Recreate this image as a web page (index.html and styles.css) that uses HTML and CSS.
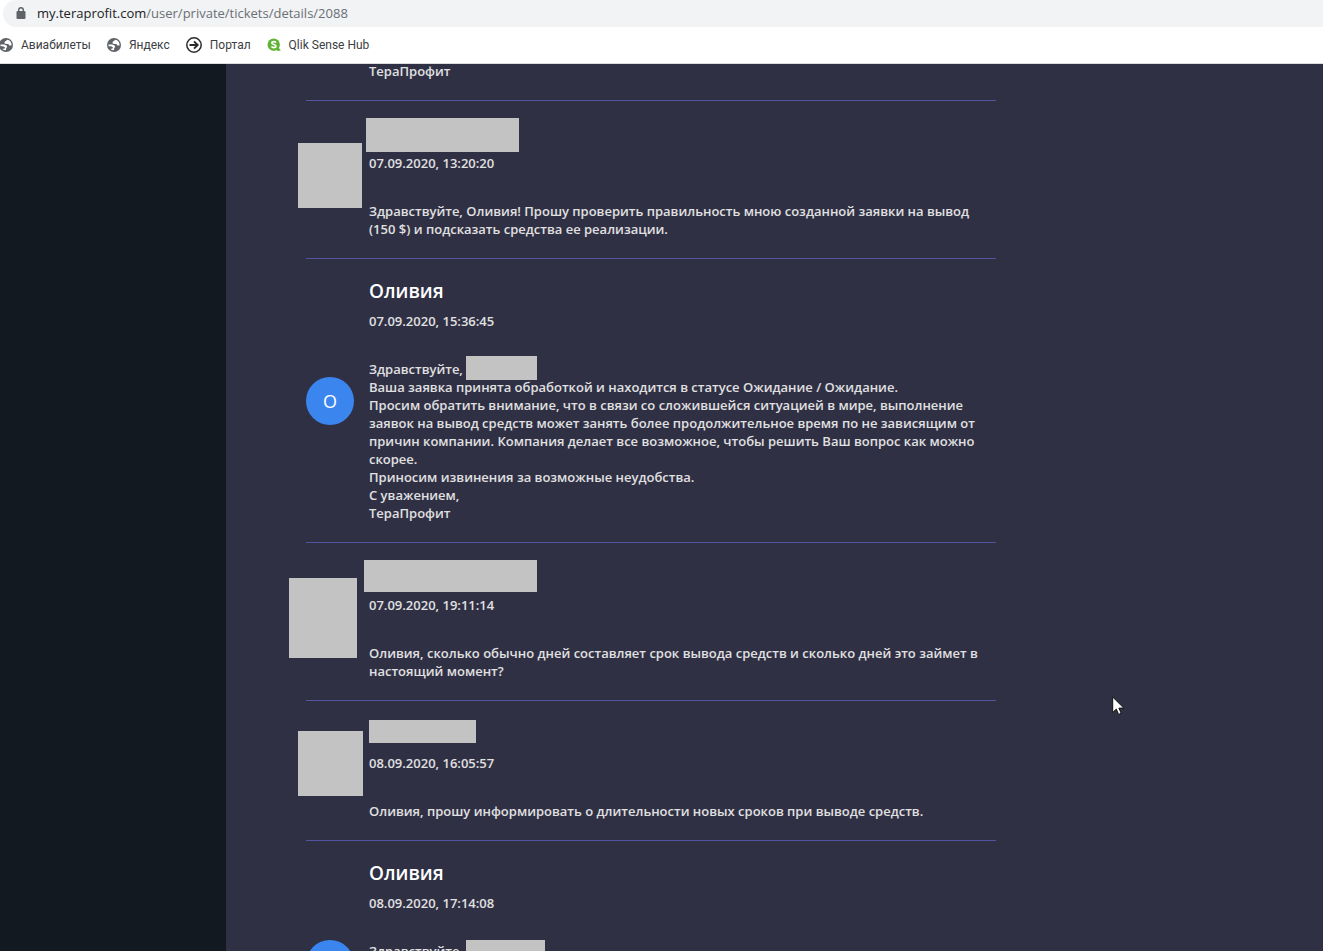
FILE: index.html
```html
<!doctype html>
<html lang="ru">
<head>
<meta charset="utf-8">
<meta name="viewport" content="width=device-width, initial-scale=1.0">
<link rel="stylesheet" href="styles.css">
<title>my.teraprofit.com</title>
</head>
<body>
<svg class="symbols" aria-hidden="true">
<symbol id="globe" viewBox="0 0 14 14">
<circle cx="7" cy="7" r="7" fill="#5f6368"/>
<path d="M8.500 1.700 6 3.400 5.300 5l1.500.9h2.400l1.300 1.700h2A5.600 5.600 0 0 0 8.500 1.700zM1.400 6.400h3.800l2.400 1.100.6 1.400-1 1-.2 2.400A5.600 5.600 0 0 1 3.300 11l2.300-.6.3-1.200-2-.9H1.600z" fill="#fff"/>
</symbol>
</svg>

<header class="browser">
<div class="address" role="textbox" aria-label="Адрес" aria-readonly="true">
<svg class="lock" viewBox="0 0 10 12" aria-hidden="true">
<path d="M2.700 5V3a2.300 2.300 0 0 1 4.600 0v2" fill="none" stroke="#5f6368" stroke-width="1.400"/>
<rect x="0.500" y="4" width="9" height="8" rx="1" fill="#5f6368"/>
</svg>
<span class="url"><span class="host">my.teraprofit.com</span>/user/private/tickets/details/2088</span>
</div>
<nav class="bookmarks">
<a href="#"><svg class="icon" viewBox="0 0 14 14" aria-hidden="true"><use href="#globe"/></svg>Авиабилеты</a>
<a href="#"><svg class="icon" viewBox="0 0 14 14" aria-hidden="true"><use href="#globe"/></svg>Яндекс</a>
<a href="#"><svg class="icon big" viewBox="0 0 16 16" aria-hidden="true"><circle cx="8" cy="8" r="7.200" fill="none" stroke="#2b2b2b" stroke-width="1.500"/><path d="M3.500 8h8M8 4.300 11.700 8 8 11.700" fill="none" stroke="#2b2b2b" stroke-width="1.900"/></svg>Портал</a>
<a href="#"><svg class="icon" viewBox="0 0 14 14" aria-hidden="true"><circle cx="6.700" cy="6.700" r="6.200" fill="#5fb336"/><path d="M9 11l2-2 2.500 3v.8H10z" fill="#5fb336"/><path d="M9 4.600C8.500 3.900 7.700 3.600 6.800 3.600c-1.200 0-2 .5-2 1.400 0 2 4.200 1 4.200 3.100 0 1-.9 1.500-2.200 1.500-1 0-1.900-.4-2.400-1.200" fill="none" stroke="#fff" stroke-width="1.600"/></svg>Qlik Sense Hub</a>
</nav>
</header>

<div class="page">
<aside class="sidebar"></aside>
<main class="ticket">

<article class="message tail">
<div class="content">
<p class="text">ТераПрофит</p>
</div>
</article>

<article class="message">
<div class="avatar"><span class="mask mask-avatar-1"></span></div>
<div class="content">
<h2><span class="mask mask-name-1"></span></h2>
<time>07.09.2020, 13:20:20</time>
<p class="text">Здравствуйте, Оливия! Прошу проверить правильность мною созданной заявки на вывод<br>
(150 $) и подсказать средства ее реализации.</p>
</div>
</article>

<article class="message">
<div class="avatar letter">О</div>
<div class="content">
<h2>Оливия</h2>
<time>07.09.2020, 15:36:45</time>
<p class="text">Здравствуйте, <span class="hidden-name"></span><br>
Ваша заявка принята обработкой и находится в статусе Ожидание / Ожидание.<br>
Просим обратить внимание, что в связи со сложившейся ситуацией в мире, выполнение<br>
заявок на вывод средств может занять более продолжительное время по не зависящим от<br>
причин компании. Компания делает все возможное, чтобы решить Ваш вопрос как можно<br>
скорее.<br>
Приносим извинения за возможные неудобства.<br>
С уважением,<br>
ТераПрофит</p>
</div>
</article>

<article class="message">
<div class="avatar"><span class="mask mask-avatar-2"></span></div>
<div class="content">
<h2><span class="mask mask-name-2"></span></h2>
<time>07.09.2020, 19:11:14</time>
<p class="text">Оливия, сколько обычно дней составляет срок вывода средств и сколько дней это займет в<br>
настоящий момент?</p>
</div>
</article>

<article class="message">
<div class="avatar"><span class="mask mask-avatar-3"></span></div>
<div class="content">
<h2><span class="mask mask-name-3"></span></h2>
<time>08.09.2020, 16:05:57</time>
<p class="text">Оливия, прошу информировать о длительности новых сроков при выводе средств.</p>
</div>
</article>

<article class="message last">
<div class="avatar letter"></div>
<div class="content">
<h2>Оливия</h2>
<time>08.09.2020, 17:14:08</time>
<p class="text">Здравствуйте, <span class="hidden-name wide"></span></p>
</div>
</article>

</main>
</div>

<svg class="cursor" viewBox="0 0 13 20" aria-hidden="true">
<path d="M.7 1v15.500l3.600-3.400 2.300 5.300 2.600-1.100-2.300-5.200h4.900z" fill="#fff" stroke="#111" stroke-width="1"/>
</svg>
</body>
</html>
```

FILE: styles.css
```css
* {
    box-sizing: border-box;
}
body {
    display: flex;
    flex-direction: column;
    height: 100vh;
    margin: 0;
    overflow: hidden;
    font-family: "Open Sans", "Noto Sans", sans-serif;
    font-size: 13px;
    line-height: 18px;
    color: #e0e0e0;
    background-color: #303045;
}
h2, p {
    margin: 0;
}
.symbols {
    display: none;
}

/* browser bar */
.browser {
    flex: none;
    height: 64px;
    background-color: #fff;
    border-bottom: 1px solid #dadce0;
}
.address {
    display: flex;
    align-items: center;
    gap: 11px;
    height: 27px;
    margin-left: 3px;
    padding-left: 13px;
    padding-bottom: 1px;
    border-radius: 14px 0 0 14px;
    background-color: #f1f3f4;
    color: #6b6f74;
}
.host {
    color: #202124;
}
.lock {
    width: 10px;
    height: 12px;
}
.bookmarks {
    display: flex;
    align-items: center;
    gap: 16px;
    height: 36px;
    margin-left: -1px;
}
.bookmarks a {
    display: flex;
    align-items: center;
    gap: 8px;
    font-family: Roboto, "Open Sans", sans-serif;
    font-size: 12px;
    color: #3c4043;
    text-decoration: none;
}
.icon {
    width: 14px;
    height: 14px;
}
.icon.big {
    width: 16px;
    height: 16px;
}

/* ticket */
.page {
    display: flex;
    flex: 1;
    min-height: 0;
}
.sidebar {
    flex: none;
    width: 226px;
    background-color: #121921;
}
.ticket {
    flex: 1;
    min-width: 0;
    padding: 0 80px;
    overflow: hidden;
}
.message {
    display: flex;
    align-items: center;
    gap: 15px;
    max-width: 690px;
    padding: 20px 0;
    border-top: 1px solid #5353a0;
}
.message.tail {
    margin-top: -2px;
    padding-top: 0;
    padding-left: 63px;
    border-top: 0;
}
.message.last {
    min-height: 247px;
}
.message.last .content {
    align-self: flex-start;
}
.content {
    flex: 1;
    min-width: 0;
    position: relative;
}
.content h2 {
    height: 24px;
    margin-bottom: 9px;
    font-size: 19px;
    font-weight: 600;
    line-height: 24px;
    color: #fff;
}
.content time {
    display: block;
    margin-bottom: 30px;
    font-weight: 600;
}
.text {
    font-weight: 600;
    white-space: nowrap;
}
.avatar {
    position: relative;
    flex: none;
    width: 48px;
    height: 48px;
}
.letter {
    border-radius: 50%;
    background-color: #3b86ee;
    color: #fff;
    font-size: 18px;
    line-height: 48px;
    text-align: center;
}

/* grey blocks over personal data */
.mask {
    position: absolute;
    background-color: #c3c3c3;
}
.mask-avatar-1 {
    top: -13px;
    left: -8px;
    width: 64px;
    height: 65px;
}
.mask-avatar-2 {
    top: -20px;
    left: -17px;
    width: 68px;
    height: 80px;
}
.mask-avatar-3 {
    top: -16px;
    left: -8px;
    width: 65px;
    height: 65px;
}
.mask-name-1 {
    top: -3px;
    left: -3px;
    width: 153px;
    height: 34px;
}
.mask-name-2 {
    top: -3px;
    left: -5px;
    width: 173px;
    height: 32px;
}
.mask-name-3 {
    top: -1px;
    left: 0;
    width: 107px;
    height: 23px;
}
.hidden-name {
    display: inline-block;
    width: 71px;
    height: 24px;
    margin: -4px 0 -2px;
    vertical-align: top;
    background-color: #c3c3c3;
}
.hidden-name.wide {
    width: 79px;
    margin: -2px 0 -4px;
}

.cursor {
    position: absolute;
    top: 696px;
    left: 1112px;
    width: 13px;
    height: 20px;
}
```
